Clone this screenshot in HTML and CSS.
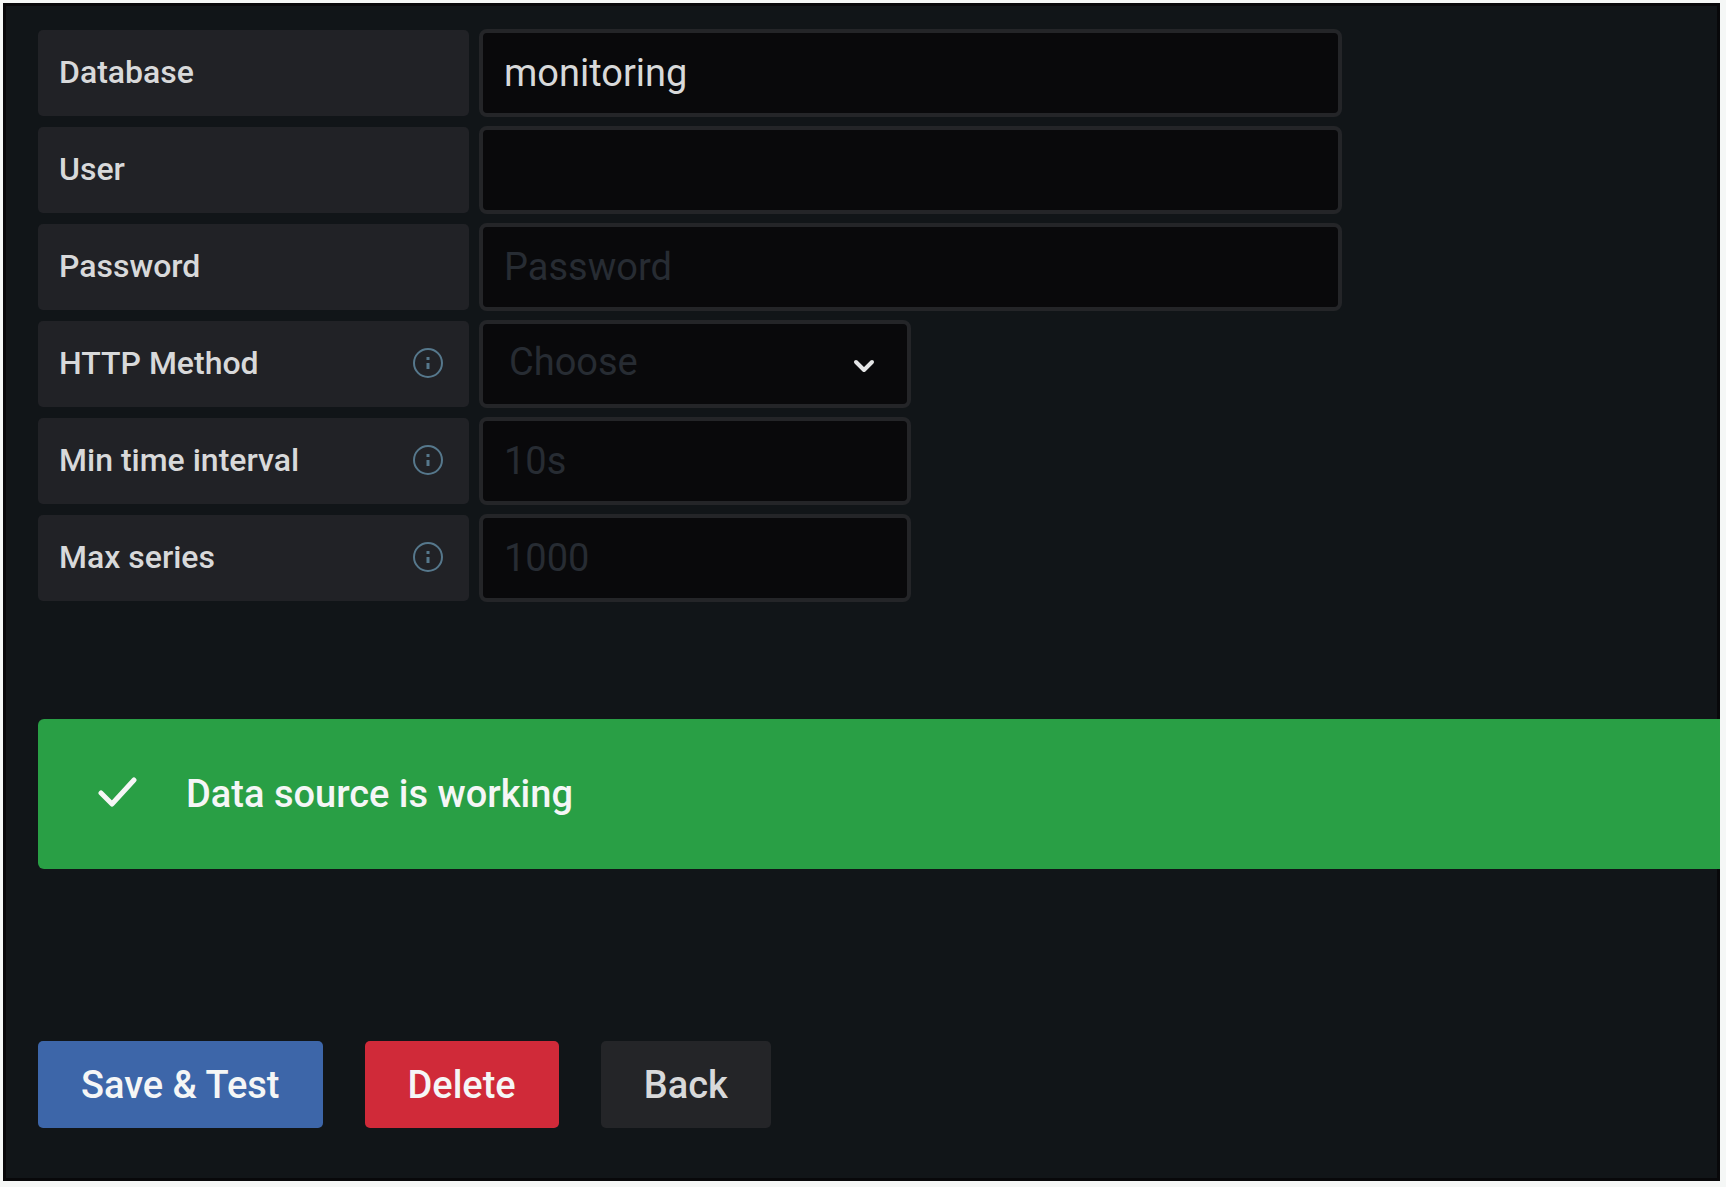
FILE: index.html
```html
<!DOCTYPE html>
<html lang="en">
<head>
  <meta charset="utf-8">
  <meta name="viewport" content="width=device-width, initial-scale=1">
  <title>InfluxDB data source settings</title>
  <link rel="stylesheet" href="styles.css">
</head>
<body>
  <main class="panel">
    <form class="settings">
      <div class="fields">
        <div class="field">
          <label class="field-label" for="database">Database</label>
          <input class="control control-wide" id="database" type="text" value="monitoring">
        </div>
        <div class="field">
          <label class="field-label" for="user">User</label>
          <input class="control control-wide" id="user" type="text">
        </div>
        <div class="field">
          <label class="field-label" for="password">Password</label>
          <input class="control control-wide" id="password" type="password" placeholder="Password">
        </div>
        <div class="field">
          <label class="field-label" for="method">HTTP Method
            <svg class="info" viewBox="0 0 32 32" aria-hidden="true"><circle cx="16" cy="16" r="14"/><path class="info-mark" d="M16 16v6M16 10v3"/></svg>
          </label>
          <div class="select">
            <select class="control" id="method" required>
              <option value="" selected>Choose</option>
              <option>GET</option>
              <option>POST</option>
            </select>
            <svg class="chevron" viewBox="0 0 22 14" aria-hidden="true"><path d="M3 3l8 8 8-8"/></svg>
          </div>
        </div>
        <div class="field">
          <label class="field-label" for="interval">Min time interval
            <svg class="info" viewBox="0 0 32 32" aria-hidden="true"><circle cx="16" cy="16" r="14"/><path class="info-mark" d="M16 16v6M16 10v3"/></svg>
          </label>
          <input class="control control-narrow" id="interval" type="text" placeholder="10s">
        </div>
        <div class="field">
          <label class="field-label" for="series">Max series
            <svg class="info" viewBox="0 0 32 32" aria-hidden="true"><circle cx="16" cy="16" r="14"/><path class="info-mark" d="M16 16v6M16 10v3"/></svg>
          </label>
          <input class="control control-narrow" id="series" type="text" placeholder="1000">
        </div>
      </div>

      <div class="alert" role="status">
        <svg class="check" viewBox="0 0 40 34" aria-hidden="true"><path d="M3 16l11 11L36 3"/></svg>
        <span>Data source is working</span>
      </div>

      <div class="actions">
        <button class="button button-primary" type="submit">Save &amp; Test</button>
        <button class="button button-danger" type="button">Delete</button>
        <button class="button button-secondary" type="button">Back</button>
      </div>
    </form>
  </main>
</body>
</html>
```

FILE: styles.css
```css
*,
*::before,
*::after {
  box-sizing: border-box;
}

body {
  display: flex;
  min-height: 100vh;
  margin: 0;
  padding: 3px 6px 6px 3px;
  background: #f5f7f6;
  color: #d8d9da;
  font-family: Roboto, "Liberation Sans", sans-serif;
  font-size: 38px;
}

.panel {
  flex: 1;
  min-width: 0;
  padding: 26px 0 52px 35px;
  background: #111518;
  box-shadow: inset 0 0 0 3px #08080a;
}

.fields {
  display: flex;
  flex-direction: column;
  gap: 9px;
}

.field {
  display: flex;
  align-items: center;
  gap: 10px;
}

.field-label {
  display: flex;
  flex: 0 0 431px;
  align-items: center;
  justify-content: space-between;
  height: 86px;
  padding: 0 25px 2px 21px;
  border-radius: 5px;
  background: #212226;
  font-size: 32px;
  font-weight: 500;
}

.control {
  width: 100%;
  height: 88px;
  margin: 0;
  padding: 0 21px;
  border: 4px solid #242528;
  border-radius: 8px;
  outline: none;
  background: #09090b;
  color: #d8d9da;
  font: inherit;
}

.control-wide {
  flex: 0 1 863px;
  min-width: 0;
}

.control-narrow {
  flex: 0 1 432px;
  min-width: 0;
}

.control::placeholder {
  color: #272c33;
  opacity: 1;
}

.select {
  position: relative;
  flex: 0 1 432px;
}

.select .control {
  padding: 0 26px 4px;
  appearance: none;
}

.select .control:invalid {
  color: #272c33;
}

.chevron {
  position: absolute;
  top: 39px;
  right: 36px;
  width: 22px;
  height: 14px;
  fill: none;
  stroke: #e4e5e6;
  stroke-width: 4;
  stroke-linecap: round;
  stroke-linejoin: round;
  pointer-events: none;
}

.info {
  width: 32px;
  height: 32px;
  fill: none;
  stroke: #56788c;
  stroke-width: 2;
}

.info-mark {
  stroke-width: 3;
}

.alert {
  display: flex;
  align-items: center;
  gap: 48px;
  height: 150px;
  margin-top: 117px;
  padding-left: 60px;
  border-radius: 6px 0 0 6px;
  background: #299f45;
  color: #f5f6f6;
  font-weight: 500;
}

.check {
  width: 40px;
  height: 34px;
  fill: none;
  stroke: currentColor;
  stroke-width: 5;
  stroke-linecap: round;
  stroke-linejoin: round;
}

.actions {
  display: flex;
  gap: 42px;
  margin-top: 172px;
}

.button {
  height: 87px;
  padding: 0 43px;
  border: 0;
  border-radius: 5px;
  color: #f5f6f6;
  font: inherit;
  font-weight: 500;
}

.button-primary {
  background: #3d66a9;
}

.button-danger {
  background: #d02a39;
}

.button-secondary {
  background: #242528;
  color: #d8d9da;
}
```
